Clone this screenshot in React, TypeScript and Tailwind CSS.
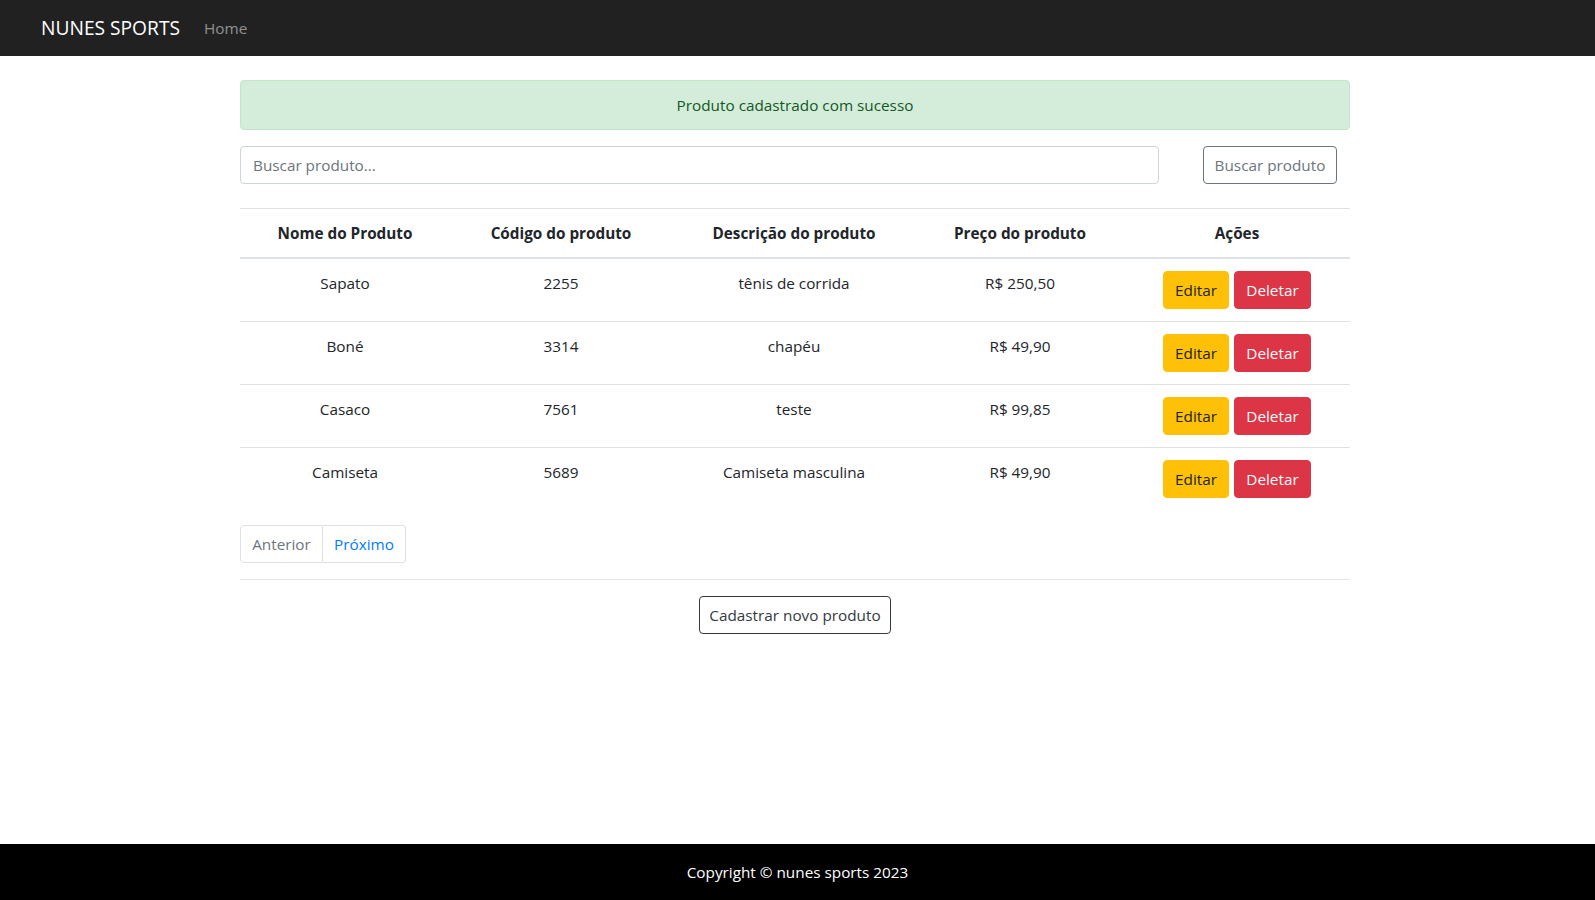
import React from "react";

const produtos = [
  { nome: "Sapato", codigo: "2255", descricao: "tênis de corrida", preco: "R$ 250,50" },
  { nome: "Boné", codigo: "3314", descricao: "chapéu", preco: "R$ 49,90" },
  { nome: "Casaco", codigo: "7561", descricao: "teste", preco: "R$ 99,85" },
  { nome: "Camiseta", codigo: "5689", descricao: "Camiseta masculina", preco: "R$ 49,90" },
];

const App = () => {
  return (
    <div className="min-h-screen flex flex-col bg-white text-[#212529] text-[15.3px] leading-6 font-['Open_Sans','Noto_Sans',sans-serif]">
      <nav className="h-[56px] shrink-0 bg-[#212121] flex items-center pl-[41px]">
        <span className="text-[19.2px] leading-[30px] text-white mr-4">NUNES SPORTS</span>
        <span className="px-2 text-white/50">Home</span>
      </nav>

      <main className="w-[1110px] ml-[240px] pt-6">
        <div className="border border-[#c3e6cb] bg-[#d4edda] text-[#155724] rounded py-3 px-5 text-center mb-4">
          Produto cadastrado com sucesso
        </div>

        <div className="flex items-center">
          <input
            className="w-[919px] h-[38px] border border-[#ced4da] rounded px-3 placeholder:text-[#6c757d] outline-none"
            placeholder="Buscar produto..."
          />
          <button className="ml-auto mr-[13px] w-[134px] h-[38px] border border-[#6c757d] text-[#6c757d] rounded">
            Buscar produto
          </button>
        </div>

        <table className="w-full table-fixed mt-6 text-center">
          <colgroup>
            <col className="w-[210px]" />
            <col className="w-[222px]" />
            <col className="w-[244px]" />
            <col className="w-[208px]" />
            <col className="w-[226px]" />
          </colgroup>
          <thead>
            <tr>
              {["Nome do Produto", "Código do produto", "Descrição do produto", "Preço do produto", "Ações"].map((h) => (
                <th
                  key={h}
                  className="py-3 px-3 font-bold border-t border-b-2 border-[#dee2e6] align-bottom"
                >
                  {h}
                </th>
              ))}
            </tr>
          </thead>
          <tbody>
            {produtos.map((p) => (
              <tr key={p.codigo}>
                <td className="py-3 px-3 border-t border-[#dee2e6] align-top">{p.nome}</td>
                <td className="py-3 px-3 border-t border-[#dee2e6] align-top">{p.codigo}</td>
                <td className="py-3 px-3 border-t border-[#dee2e6] align-top">{p.descricao}</td>
                <td className="py-3 px-3 border-t border-[#dee2e6] align-top">{p.preco}</td>
                <td className="py-3 px-3 border-t border-[#dee2e6] align-top">
                  <div className="flex justify-center gap-[5px]">
                    <button className="h-[38px] w-[66px] rounded bg-[#ffc107] border border-[#ffc107] text-[#212529]">
                      Editar
                    </button>
                    <button className="h-[38px] w-[77px] rounded bg-[#dc3545] border border-[#dc3545] text-white">
                      Deletar
                    </button>
                  </div>
                </td>
              </tr>
            ))}
          </tbody>
        </table>

        <div className="flex mt-[15px]">
          <span className="h-[38px] w-[83px] flex items-center justify-center border border-[#dee2e6] rounded-l text-[#6c757d]">
            Anterior
          </span>
          <span className="h-[38px] w-[83px] flex items-center justify-center border border-l-0 border-[#dee2e6] rounded-r text-[#007bff]">
            Próximo
          </span>
        </div>

        <hr className="mt-4 mb-4 border-t border-black/10" />

        <div className="flex justify-center">
          <button className="h-[38px] w-[192px] border border-[#343a40] rounded text-[#343a40]">
            Cadastrar novo produto
          </button>
        </div>
      </main>

      <footer className="mt-auto h-[56px] shrink-0 bg-black flex items-center justify-center text-white">
        Copyright © nunes sports 2023
      </footer>
    </div>
  );
};

export default App;
